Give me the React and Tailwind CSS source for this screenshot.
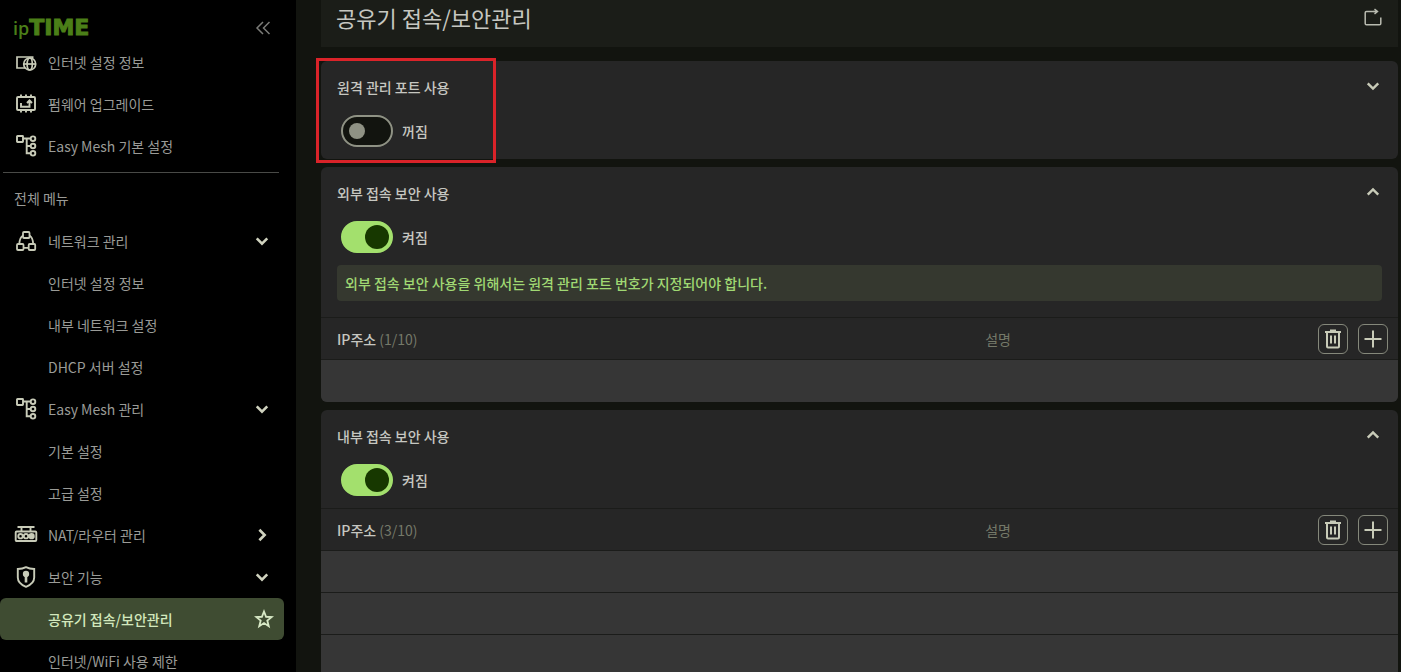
import React, { useState } from "react";

function Icon({ size = 24, stroke = 2, className = "", children }) {
  return (
    <svg
      width={size}
      height={size}
      viewBox="0 0 24 24"
      fill="none"
      stroke="currentColor"
      strokeWidth={stroke}
      className={`shrink-0 ${className}`}
      aria-hidden="true"
    >
      {children}
    </svg>
  );
}

const InternetIcon = () => (
  <Icon stroke={1.7}>
    <path d="M19.500 7H3v11h8M3 6.500V18M18.500 7v2" />
    <circle cx="15.700" cy="14" r="6" />
    <ellipse cx="15.700" cy="14" rx="2.600" ry="6" />
    <path d="M9.700 14h12" />
  </Icon>
);

const FirmwareIcon = () => (
  <Icon stroke={1.9}>
    <rect x="3" y="5" width="18" height="13" rx="1" />
    <path d="M7 2.5V5M12 2.5V5M17 2.5V5M7 18v2.5M12 18v2.5M17 18v2.5" />
    <path d="M7 11v3.8h8.5V9.5M13 11l2.5-2.6L18 11" />
  </Icon>
);

const MeshIcon = () => (
  <Icon stroke={1.9}>
    <rect x="3" y="2" width="6" height="6" rx=".5" />
    <path d="M9 4.5h8M12.7 4.5v14.8H17M12.7 12H17" />
    <circle cx="19" cy="4.7" r="2.3" />
    <circle cx="19" cy="12" r="2.3" />
    <circle cx="19" cy="19.3" r="2.3" />
  </Icon>
);

const NetworkIcon = () => (
  <Icon stroke={1.8}>
    <rect x="9" y="3" width="6.5" height="6" rx="1" />
    <rect x="3" y="15" width="6.5" height="6" rx="1" />
    <rect x="14.7" y="15" width="6.5" height="6" rx="1" />
    <path d="M9 6.5C6.500 8 5.500 11 5.300 15M15.500 6.500C18 8 19 11 19.200 15M9.500 18.800h5.200" />
  </Icon>
);

const RouterIcon = () => (
  <Icon stroke={1.9}>
    <path d="M3.500 4h17M7.500 4v4M16.500 4v4" />
    <rect x="1.700" y="8.500" width="20.600" height="9.500" rx="1" />
    <circle cx="6.500" cy="13.200" r="2.200" />
    <circle cx="12" cy="13.200" r="2.200" />
    <circle cx="17.600" cy="13.200" r="2.200" fill="currentColor" />
  </Icon>
);

const ShieldIcon = () => (
  <Icon stroke={1.9}>
    <path d="M12 2.200C9.500 3.500 6.500 4 3.800 4v8.500c0 4.500 3.600 7.500 8.200 9.300 4.600-1.800 8.200-4.800 8.200-9.300V4c-2.700 0-5.700-.5-8.200-1.800z" />
    <circle cx="12" cy="9" r="2.200" fill="currentColor" />
    <path d="M12 9v8.500" strokeWidth="2.600" />
  </Icon>
);

const StarIcon = () => (
  <Icon size={20} stroke={2.2}>
    <path d="M12 3l2.500 6.300 6.700.4-5.200 4.300 1.700 6.600L12 16.900l-5.700 3.700L8 14 2.800 9.700l6.700-.4z" />
  </Icon>
);

function Chevron({ direction, bold }) {
  const paths = {
    down: "M2 5l6 6 6-6",
    up: "M2 11l6-6 6 6",
    right: "M5 2l6 6-6 6",
  };
  return (
    <svg
      width="14"
      height="14"
      viewBox="0 0 16 16"
      fill="none"
      stroke="currentColor"
      strokeWidth={bold ? 3 : 2.8}
      className="shrink-0"
      aria-hidden="true"
    >
      <path d={paths[direction]} />
    </svg>
  );
}

function MenuItem({ icon, label, chevron, active }) {
  if (active) {
    return (
      <li className="mr-3 flex h-[42px] items-center rounded-md bg-[#3f4c32] pr-[10px] text-[#d3e8bd]">
        <a href="#" aria-current="page" className="flex-1 pl-12 font-medium">
          {label}
        </a>
        <button type="button" aria-label="즐겨찾기" className="text-[#d7e8c5]">
          <StarIcon />
        </button>
      </li>
    );
  }
  return (
    <li className="h-[42px]">
      <a href="#" className="flex h-full items-center pr-[27px] pl-[14px]">
        <span className="flex w-[34px] text-[#c8cbb8]">{icon}</span>
        <span className="flex-1">{label}</span>
        {chevron && (
          <span className="text-[#d0d3bf]">
            <Chevron direction={chevron} bold />
          </span>
        )}
      </a>
    </li>
  );
}

function Sidebar() {
  return (
    <aside className="flex w-[296px] shrink-0 flex-col overflow-hidden bg-black text-sm text-[#9a9b97]">
      <div className="flex h-[52px] shrink-0 items-center justify-between pt-1 pr-[25px] pl-[13px]">
        <a href="#" className="flex items-baseline leading-none text-[#4b7f18]">
          <span className="font-['Open_Sans'] text-[18px] leading-none font-semibold">ip</span>
          <span className="font-['DejaVu_Sans'] text-[22px] leading-none font-bold [-webkit-text-stroke:1px_#4b7f18]">
            TIME
          </span>
        </a>
        <button type="button" aria-label="메뉴 접기" className="text-[#7b7c78]">
          <svg width="16" height="14" viewBox="0 0 16 14" fill="none" stroke="currentColor" strokeWidth="1.500">
            <path d="M8 1L2 7l6 6M14.500 1l-6 6 6 6" />
          </svg>
        </button>
      </div>
      <nav className="min-h-0 flex-1 overflow-hidden">
        <ul className="-mt-[11px]">
          <MenuItem icon={<InternetIcon />} label="인터넷 설정 정보" />
          <MenuItem icon={<FirmwareIcon />} label="펌웨어 업그레이드" />
          <MenuItem icon={<MeshIcon />} label="Easy Mesh 기본 설정" />
        </ul>
        <hr className="mt-[5px] mr-[17px] mb-1 ml-[3px] border-[#494a47]" />
        <h2 className="flex h-[42px] items-center pl-[14px]">전체 메뉴</h2>
        <ul className="pt-px">
          <MenuItem icon={<NetworkIcon />} label="네트워크 관리" chevron="down" />
          <MenuItem label="인터넷 설정 정보" />
          <MenuItem label="내부 네트워크 설정" />
          <MenuItem label="DHCP 서버 설정" />
          <MenuItem icon={<MeshIcon />} label="Easy Mesh 관리" chevron="down" />
          <MenuItem label="기본 설정" />
          <MenuItem label="고급 설정" />
          <MenuItem icon={<RouterIcon />} label="NAT/라우터 관리" chevron="right" />
          <MenuItem icon={<ShieldIcon />} label="보안 기능" chevron="down" />
          <MenuItem label="공유기 접속/보안관리" active />
          <MenuItem label="인터넷/WiFi 사용 제한" />
        </ul>
      </nav>
    </aside>
  );
}

function Toggle({ initial, name }) {
  const [on, setOn] = useState(initial);
  return (
    <label className="ml-1 flex w-fit items-center gap-[9px]">
      <input
        type="checkbox"
        role="switch"
        aria-label={name}
        checked={on}
        onChange={(e) => setOn(e.target.checked)}
        className="flex h-8 w-[52px] shrink-0 appearance-none items-center rounded-full border-2 border-[#8f9284] bg-[#12140f] px-1.5 before:size-4 before:rounded-full before:bg-[#8f9284] checked:justify-end checked:border-[#a3e06d] checked:bg-[#a3e06d] checked:px-0.5 checked:before:size-6 checked:before:bg-[#173800]"
      />
      <span>{on ? "켜짐" : "꺼짐"}</span>
    </label>
  );
}

function Card({ title, expanded, initial, message, count, rows = [], children }) {
  return (
    <section className="relative rounded-md bg-[#262626]">
      <div className={message ? "px-4 pt-4 pb-4" : "px-4 pt-4 pb-3"}>
        <div className="flex h-5 items-center justify-between font-medium">
          <h2>{title}</h2>
          <button type="button" aria-label={`${title} 펼치기`} className="mr-0.5 mb-0.5 text-[#c8cbb8]">
            <Chevron direction={expanded ? "up" : "down"} />
          </button>
        </div>
        <div className="mt-[18px] font-medium">
          <Toggle initial={initial} name={title} />
        </div>
        {message && (
          <p className="mt-3 flex min-h-9 items-center rounded bg-[#35382f] px-2 font-medium text-[#a0d873]">
            {message}
          </p>
        )}
      </div>
      {count && (
        <table className="w-full table-fixed border-separate border-spacing-0 text-left">
          <thead>
            <tr className="h-[42px]">
              <th className="w-3/5 border-t border-[#1b1c1a] p-0 pl-4 font-medium">
                IP주소 <span className="font-normal text-[#757969]">{count}</span>
              </th>
              <th className="border-t border-[#1b1c1a] p-0 pl-[18px] font-normal text-[#757969]">설명</th>
              <th className="w-[90px] border-t border-[#1b1c1a] p-0 pr-[10px]">
                <div className="flex justify-end gap-[10px] text-[#c8cbb8]">
                  <button
                    type="button"
                    aria-label="삭제"
                    className="flex size-[30px] items-center justify-center rounded-md border border-[#85887b]"
                  >
                    <svg width="16" height="20" viewBox="0 0 16 20" fill="none" stroke="currentColor" strokeWidth="2">
                      <path d="M0 3h16M5 1.500h6M2 3v14.500c0 .6.400 1 1 1h10c.6 0 1-.4 1-1V3M6 6.500v8M10 6.500v8" />
                    </svg>
                  </button>
                  <button
                    type="button"
                    aria-label="추가"
                    className="flex size-[30px] items-center justify-center rounded-md border border-[#85887b]"
                  >
                    <svg width="18" height="18" viewBox="0 0 18 18" fill="none" stroke="currentColor" strokeWidth="2">
                      <path d="M9 .5v17M.5 9h17" />
                    </svg>
                  </button>
                </div>
              </th>
            </tr>
          </thead>
          <tbody>
            {rows.map((row) => (
              <tr key={row} className="group h-[43px] not-last:h-[42px]">
                <td
                  colSpan={3}
                  className="border-t border-[#1b1c1a] bg-[#363636] p-0 group-last:rounded-b-md"
                />
              </tr>
            ))}
          </tbody>
        </table>
      )}
      {children}
    </section>
  );
}

export default function App() {
  return (
    <div className="flex h-screen overflow-hidden bg-[#12140f] font-['Noto_Sans_CJK_KR',sans-serif] text-sm text-[#c6c7c1]">
      <Sidebar />
      <main className="min-w-0 flex-1 pr-[3px] pl-[25px]">
        <header className="flex h-[47px] items-start justify-between bg-[#1b1d18] pt-0.5 pr-4 pl-[15px]">
          <h1 className="text-[22px] leading-[30px]">공유기 접속/보안관리</h1>
          <button type="button" aria-label="새로고침" className="mt-1.5 text-[#b9bbb0]">
            <svg width="18" height="18" viewBox="0 0 18 18" fill="none" stroke="currentColor" strokeWidth="1.500">
              <path d="M13 3.500H2.500c-.8 0-1.300.5-1.300 1.300v10.700c0 .8.500 1.300 1.300 1.300h13c.8 0 1.300-.5 1.300-1.300V9.500" />
              <path d="M9.500 3.500h4M10.500 1l3 2.500-3 2.500" />
            </svg>
          </button>
        </header>
        <div className="mt-[14px] flex flex-col gap-2">
          <Card title="원격 관리 포트 사용" initial={false}>
            <div className="pointer-events-none absolute -top-[3px] -left-[5px] h-[105px] w-[180px] border-3 border-[#da2329]" />
          </Card>
          <Card
            title="외부 접속 보안 사용"
            expanded
            initial={true}
            message="외부 접속 보안 사용을 위해서는 원격 관리 포트 번호가 지정되어야 합니다."
            count="(1/10)"
            rows={[1]}
          />
          <Card title="내부 접속 보안 사용" expanded initial={true} count="(3/10)" rows={[1, 2, 3]} />
        </div>
      </main>
    </div>
  );
}
